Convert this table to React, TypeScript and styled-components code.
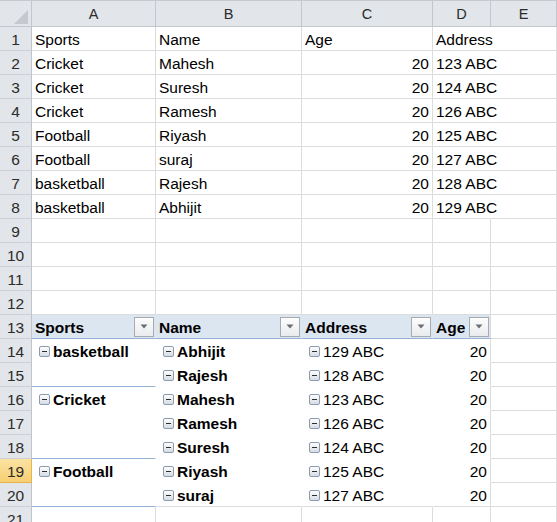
import React from "react";
import styled, { createGlobalStyle } from "styled-components";

const GRID = "#dadcdd";
const HEAD_BG = "#e2e5e9";
const HEAD_LINE = "#c3c7cd";
const PIVOT_BG = "#dce6f1";
const PIVOT_LINE = "#95b3d7";
const COLS = "32px 124px 146px 131px 58px 66px";

const Global = createGlobalStyle`
  html, body { margin: 0; padding: 0; background: #fff; }
  body { width: 557px; height: 522px; overflow: hidden; font-family: "Liberation Sans", Arial, sans-serif; }
`;

const Sheet = styled.div`
  width: 557px;
  height: 522px;
  overflow: hidden;
  color: #000;
  font-size: 15.5px;
`;

const HeaderRow = styled.div`
  display: grid;
  grid-template-columns: ${COLS};
  height: 27px;
  border-top: 1px solid #c6c9ce;
  box-sizing: border-box;
  background: ${HEAD_BG};
`;

const CornerCell = styled.div`
  border-right: 1px solid ${HEAD_LINE};
  border-bottom: 1px solid ${HEAD_LINE};
  display: flex;
  align-items: flex-end;
  justify-content: flex-end;
  padding: 0 3px 2px 0;
  box-sizing: border-box;
`;

const ColHeader = styled.div`
  border-right: 1px solid ${HEAD_LINE};
  border-bottom: 1px solid ${HEAD_LINE};
  display: flex;
  align-items: center;
  justify-content: center;
  font-size: 14.5px;
  color: #2b2b2b;
  padding-top: 1px;
  box-sizing: border-box;
`;

const Row = styled.div`
  display: grid;
  grid-template-columns: ${COLS};
  height: 24px;
`;

const RowHeader = styled.div<{ $active?: boolean }>`
  background: ${(p) => (p.$active ? "linear-gradient(#fbe3a3, #f7cf73)" : HEAD_BG)};
  border-right: 1px solid ${(p) => (p.$active ? "#e8b54a" : "#bfc4ca")};
  border-bottom: 1px solid ${(p) => (p.$active ? "#e8b54a" : "#cdd1d6")};
  display: flex;
  align-items: center;
  justify-content: center;
  color: #2b2b2b;
  font-size: 15.5px;
  padding-top: 2px;
  box-sizing: border-box;
`;

const Cell = styled.div<{
  $right?: string;
  $bottom?: string;
  $bg?: string;
  $align?: "left" | "right";
  $bold?: boolean;
}>`
  box-sizing: border-box;
  height: 24px;
  border-right: 1px solid ${(p) => p.$right ?? GRID};
  border-bottom: 1px solid ${(p) => p.$bottom ?? GRID};
  background: ${(p) => p.$bg ?? "transparent"};
  display: flex;
  align-items: center;
  justify-content: ${(p) => (p.$align === "right" ? "flex-end" : "flex-start")};
  padding: 2px 3px 0 3px;
  white-space: nowrap;
  overflow: visible;
  font-weight: ${(p) => (p.$bold ? 700 : 400)};
  line-height: 21px;
`;

const PivotHeadCell = styled(Cell)`
  justify-content: space-between;
  padding: 0 1px 0 3px;
`;

const HeadLabel = styled.span`
  padding-top: 2px;
`;

const FilterButton = styled.div`
  width: 20px;
  height: 20px;
  box-sizing: border-box;
  border: 1px solid #a7abb0;
  background: linear-gradient(#fdfdfd, #e9ebee);
  display: flex;
  align-items: center;
  justify-content: center;
`;

const PivotItem = styled.div`
  display: flex;
  align-items: center;
  padding-left: 4px;
`;

const MinusBox = styled.span`
  width: 11px;
  height: 11px;
  box-sizing: border-box;
  border: 1px solid #8d9bb0;
  border-radius: 2px;
  background: linear-gradient(#ffffff, #d6dce4);
  margin-right: 3px;
  margin-top: -1px;
  display: flex;
  align-items: center;
  justify-content: center;
  &::after {
    content: "";
    width: 5px;
    height: 1px;
    background: #2e2e2e;
  }
`;

const Arrow = () => (
  <svg width="8" height="5" viewBox="0 0 8 5">
    <path d="M0.5 0.5 L7.5 0.5 L4 4.5 Z" fill="#6b6e73" />
  </svg>
);

const CornerTriangle = () => (
  <svg width="14" height="14" viewBox="0 0 14 14">
    <path d="M14 0 L14 14 L0 14 Z" fill="#c5c9cd" />
  </svg>
);

const data: string[][] = [
  ["Sports", "Name", "Age", "Address"],
  ["Cricket", "Mahesh", "20", "123 ABC"],
  ["Cricket", "Suresh", "20", "124 ABC"],
  ["Cricket", "Ramesh", "20", "126 ABC"],
  ["Football", "Riyash", "20", "125 ABC"],
  ["Football", "suraj", "20", "127 ABC"],
  ["basketball", "Rajesh", "20", "128 ABC"],
  ["basketball", "Abhijit", "20", "129 ABC"],
];

type PRow = { sport?: string; name: string; addr: string; groupEnd?: boolean; last?: boolean };
const pivot: PRow[] = [
  { sport: "basketball", name: "Abhijit", addr: "129 ABC" },
  { name: "Rajesh", addr: "128 ABC", groupEnd: true },
  { sport: "Cricket", name: "Mahesh", addr: "123 ABC" },
  { name: "Ramesh", addr: "126 ABC" },
  { name: "Suresh", addr: "124 ABC", groupEnd: true },
  { sport: "Football", name: "Riyash", addr: "125 ABC" },
  { name: "suraj", addr: "127 ABC", groupEnd: true, last: true },
];

const Item = ({ text }: { text: string }) => (
  <PivotItem>
    <MinusBox />
    <span>{text}</span>
  </PivotItem>
);

export default function App() {
  const active = 19;
  return (
    <Sheet>
      <Global />
      <HeaderRow>
        <CornerCell>
          <CornerTriangle />
        </CornerCell>
        {["A", "B", "C", "D", "E"].map((c) => (
          <ColHeader key={c}>{c}</ColHeader>
        ))}
      </HeaderRow>

      {data.map((r, i) => (
        <Row key={"d" + i}>
          <RowHeader $active={i + 1 === active}>{i + 1}</RowHeader>
          <Cell>{r[0]}</Cell>
          <Cell>{r[1]}</Cell>
          <Cell $align={i > 0 ? "right" : "left"}>{r[2]}</Cell>
          <Cell $right="transparent">{r[3]}</Cell>
          <Cell />
        </Row>
      ))}

      {[9, 10, 11, 12].map((n) => (
        <Row key={"e" + n}>
          <RowHeader>{n}</RowHeader>
          <Cell />
          <Cell />
          <Cell />
          <Cell />
          <Cell />
        </Row>
      ))}

      <Row>
        <RowHeader>13</RowHeader>
        {["Sports", "Name", "Address", "Age"].map((h, i) => (
          <PivotHeadCell
            key={h}
            $bold
            $bg={PIVOT_BG}
            $bottom={PIVOT_LINE}
            $right={i === 3 ? GRID : "transparent"}
          >
            <HeadLabel>{h}</HeadLabel>
            <FilterButton>
              <Arrow />
            </FilterButton>
          </PivotHeadCell>
        ))}
        <Cell />
      </Row>

      {pivot.map((p, i) => {
        const n = 14 + i;
        const bodyBottom = p.last ? GRID : "transparent";
        return (
          <Row key={"p" + n}>
            <RowHeader $active={n === active}>{n}</RowHeader>
            <Cell
              $bold
              $right="transparent"
              $bottom={p.groupEnd ? PIVOT_LINE : "transparent"}
            >
              {p.sport ? <Item text={p.sport} /> : null}
            </Cell>
            <Cell $bold $right="transparent" $bottom={bodyBottom}>
              <Item text={p.name} />
            </Cell>
            <Cell $right="transparent" $bottom={bodyBottom}>
              <Item text={p.addr} />
            </Cell>
            <Cell $align="right" $bottom={bodyBottom}>
              20
            </Cell>
            <Cell />
          </Row>
        );
      })}

      <Row>
        <RowHeader>21</RowHeader>
        <Cell />
        <Cell />
        <Cell />
        <Cell />
        <Cell />
      </Row>
    </Sheet>
  );
}
